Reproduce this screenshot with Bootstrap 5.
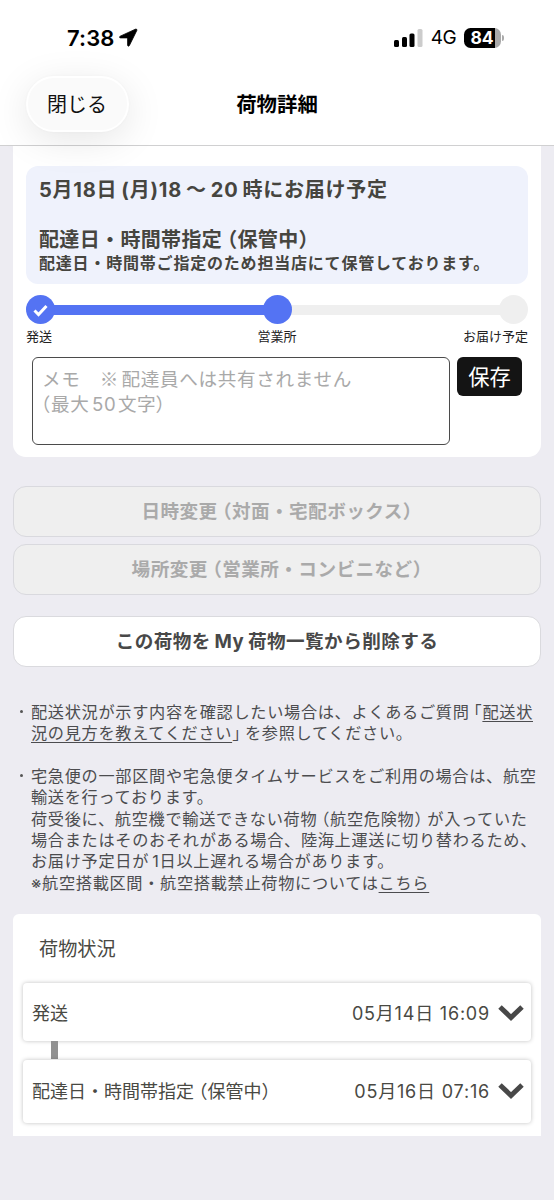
<!DOCTYPE html>
<html lang="ja">
<head>
<meta charset="utf-8">
<meta name="viewport" content="width=device-width, initial-scale=1">
<title>荷物詳細</title>
<link href="https://cdn.jsdelivr.net/npm/bootstrap@5.3.0/dist/css/bootstrap.min.css" rel="stylesheet">
<style>
body{background:#edecf2;color:#4a4a48;font-family:Inter,"Noto Sans CJK JP",sans-serif;overflow:hidden;height:1200px}
.top-area{height:146px;border-bottom:1.5px solid #d0d0d1;color:#000;position:relative}
.status{height:76px;padding:0 50px 0 67px}
.clock{font-size:22px;font-weight:600;letter-spacing:.1px;line-height:26px}
.net{font-size:19px;font-weight:400;letter-spacing:-.6px}
.batt{width:37px;height:20px;border-radius:6.5px;background:linear-gradient(90deg,#000 84%,#a9a9a9 84%);color:#fff;font-size:17.5px;font-weight:700;line-height:20px;padding-right:1px}
.batt-cap{width:2px;height:6px;border-radius:0 2px 2px 0;background:#aaa;margin-left:1px}
.bar-row{height:56px;display:grid;grid-template-columns:103px 1fr 103px;padding:0 26px 0 26px}
.close-pill{border:2px solid #fff;border-radius:28px;background:#fafafa;box-shadow:0 8px 38px rgba(0,0,0,.1),0 0 3px rgba(0,0,0,.03);font-size:20px;color:#111;padding:2px 1px 0 0}
.page-title{font-size:20.4px;font-weight:700;padding-top:3px}
.main-card{width:528px;margin:0 0 0 13px;background:#fff;border-radius:0 0 13px 13px;height:311px;padding:20px 13px 0}
.info{height:118px;border-radius:12px;background:#eff2fc;padding:11px 13px 0;font-weight:700;white-space:nowrap;color:#46453f}
.info .big{font-size:20px;letter-spacing:.35px;line-height:26px}
.info .sub{font-size:16px;letter-spacing:.8px;line-height:22px;margin-top:-1px}
.info .date{letter-spacing:.78px}
.op,.cl,.half{font-feature-settings:"halt"}
.op{margin-left:.25em}.cl{margin-right:.25em}
.gl{margin-left:.2em}.gr{margin-right:.2em}
.kome{font-family:"Noto Sans CJK JP",sans-serif}
.track{height:29px;margin-top:11px}
.dot{width:29px;height:29px;border-radius:50%;background:#5473f3;flex:none;position:relative;z-index:1}
.seg{height:10px;flex:1;background:#5473f3;margin:0 -2px}
.off{background:#efefef}
.labels{display:grid;grid-template-columns:1fr 1fr 1fr;font-size:13px;line-height:20px;margin-top:2px;color:#222}
.memo-row{margin:11px 6px 0;gap:7px}
.memo{width:419px;height:88px;border:1.5px solid #4b4b4b;border-radius:6px;font-size:18.6px;line-height:24.5px;letter-spacing:.65px;color:#a9a9a9;padding:8px 9px;white-space:nowrap}
.memo .gl{margin-left:.14em}.memo .gr{margin-right:.08em}
.memo .half{margin-left:-1px}
.save{width:65px;height:39px;border-radius:6px;background:#141414;color:#fff;font-size:21.3px;line-height:40px;padding:0;border:0}
.wide{display:flex;align-items:center;justify-content:center;width:528px;height:51px;margin-left:13px;border:1.5px solid #dadade;border-radius:13px;font-weight:700;font-size:18.6px;letter-spacing:.45px;padding:1px 0 0;color:#484848;background:#fff;white-space:nowrap}
.wide:disabled{background:#efefef;color:#aaa;opacity:1;border-color:#d9d9de}
.wide-first{margin-top:29px}.wide-next{margin-top:7px}.wide-delete{margin-top:21px}
.notes{list-style:none;margin:35px 0 0;padding:0 0 0 31px;font-size:16.2px;line-height:21.4px;letter-spacing:.68px;white-space:nowrap;color:#4c4c4f}
.notes li{position:relative;margin-bottom:21px}
.notes li:last-child{margin-bottom:20px}
.notes li::before{content:"";position:absolute;left:-11px;top:8px;width:3px;height:3px;border-radius:50%;background:#555}
.notes a{color:inherit;text-decoration:underline;text-decoration-thickness:1px;text-underline-offset:3px}
.history{width:528px;height:222px;margin-left:13px;background:#fff;border-radius:6px 6px 0 0;padding:0 10px;color:#494943}
.history h2{font-size:19.2px;font-weight:400;line-height:26px;padding:22px 16px 0;margin:0 0 21px}
.event{border-radius:4px;box-shadow:0 0 4px rgba(0,0,0,.25);height:58px;padding:3px 7px 0 9px;font-size:18px;background:#fff;white-space:nowrap}
.event-tall{height:63px;padding-top:0}
.link-bar{width:7px;height:18px;background:#919191;margin-left:28px;margin-bottom:1px}
.event svg{position:relative;top:-1px}
.when{letter-spacing:.8px}
</style>
</head>
<body>
<header class="top-area bg-white">
  <div class="status d-flex align-items-center">
    <span class="clock">7:38</span>
    <svg class="ms-1" width="20" height="20" viewBox="0 0 20 20"><path d="M17.4 1.2 2.2 8.2c-1.1.5-.8 1.7.4 1.7h7v7.2c0 1.2 1.3 1.5 1.8.4L18.8 2.5c.4-1-.4-1.7-1.4-1.3z" stroke="#000" stroke-width=".8"/></svg>
    <svg class="ms-auto me-2" width="29" height="18" viewBox="0 0 29 18"><rect y="11" width="5" height="7" rx="1.5"/><rect x="8" y="8" width="5" height="10" rx="1.5"/><rect x="15.5" y="4.5" width="5" height="13.5" rx="1.5"/><rect x="23.5" y="0" width="5" height="18" rx="1.5" fill="#ccc"/></svg>
    <span class="net">4G</span>
    <span class="batt ms-2 text-center">84</span><span class="batt-cap"></span>
  </div>
  <div class="bar-row">
    <button class="close-pill" type="button">閉じる</button>
    <div class="page-title d-flex align-items-center justify-content-center">荷物詳細</div>
  </div>
</header>
<main>
  <section class="main-card">
    <div class="info">
      <div class="big date">5月18日<span class="gl">(</span>月)18<span class="gl gr">～</span>20<span class="gl">時</span>にお届け予定</div>
      <div class="big mt-4">配達日・時間帯指定<span class="op">（</span>保管中<span class="half">）</span></div>
      <div class="sub">配達日・時間帯ご指定のため担当店にて保管しております。</div>
    </div>
    <div class="track d-flex align-items-center">
      <span class="dot d-flex"><svg width="29" height="29" viewBox="0 0 29 29" fill="none" stroke="#fff" stroke-width="3"><path d="m8.5 15.5 4 4 8-8.5"/></svg></span>
      <span class="seg"></span><span class="dot"></span><span class="seg off"></span><span class="dot off"></span>
    </div>
    <div class="labels"><span>発送</span><span class="text-center">営業所</span><span class="text-end">お届け予定</span></div>
    <div class="memo-row d-flex align-items-start">
      <div class="memo" role="textbox">メモ　<span class="kome">※</span><span class="gl">配</span>達員へは共有されません<br><span class="half">（</span>最大<span class="gl gr">50</span>文字<span class="half">）</span></div>
      <button class="save btn" type="button">保存</button>
    </div>
  </section>
  <button class="wide wide-first" disabled><span>日時変更<span class="op">（</span>対面・宅配ボックス<span class="half">）</span></span></button>
  <button class="wide wide-next" disabled><span>場所変更<span class="op">（</span>営業所・コンビニなど<span class="half">）</span></span></button>
  <button class="wide wide-delete"><span>この荷物を<span class="gl gr">My</span>荷物一覧から削除する</span></button>
  <ul class="notes">
    <li>配送状況が示す内容を確認したい場合は、よくあるご質問<span class="op">「</span><a href="#">配送状<br>況の見方を教えてください</a><span class="cl">」</span>を参照してください。</li>
    <li>宅急便の一部区間や宅急便タイムサービスをご利用の場合は、航空<br>輸送を行っております。<br>荷受後に、航空機で輸送できない荷物<span class="op">（</span>航空危険物<span class="cl">）</span>が入っていた<br>場合またはそのおそれがある場合、陸海上運送に切り替わるため、<br>お届け予定日が<span class="gl">1</span>日以上遅れる場合があります。<br>※航空搭載区間・航空搭載禁止荷物については<a href="#">こちら</a></li>
  </ul>
  <section class="history">
    <h2>荷物状況</h2>
    <div class="event d-flex align-items-center"><span>発送</span><span class="when ms-auto me-2">05月14日 16:09</span><svg width="26" height="18" viewBox="0 0 26 18" fill="none" stroke="#484848" stroke-width="5"><path d="m2 3 11 10.5L24 3"/></svg></div>
    <div class="link-bar"></div>
    <div class="event event-tall d-flex align-items-center"><span>配達日・時間帯指定<span class="op">（</span>保管中<span class="half">）</span></span><span class="when ms-auto me-2">05月16日 07:16</span><svg width="26" height="18" viewBox="0 0 26 18" fill="none" stroke="#484848" stroke-width="5"><path d="m2 3 11 10.5L24 3"/></svg></div>
  </section>
</main>
<script src="https://cdn.jsdelivr.net/npm/bootstrap@5.3.0/dist/js/bootstrap.bundle.min.js"></script>
</body>
</html>
